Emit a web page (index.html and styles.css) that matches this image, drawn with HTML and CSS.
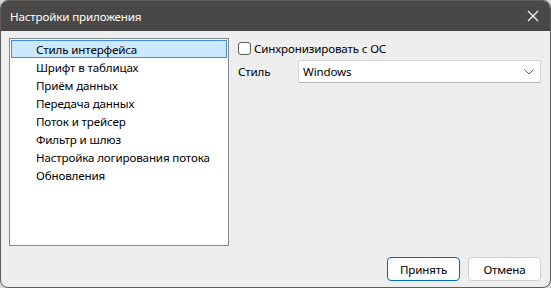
FILE: index.html
```html
<!DOCTYPE html>
<html lang="ru">
<head>
  <meta charset="UTF-8">
  <title>Настройки приложения</title>
  <link rel="stylesheet" href="styles.css">
</head>
<body>
  <div class="window">
    <div class="titlebar">
      <span class="title">Настройки приложения</span>
      <svg class="close" width="12" height="12" viewBox="0 0 12 12">
        <path d="M1 1 L11 11 M11 1 L1 11" stroke="#ffffff" stroke-width="1.2" fill="none"/>
      </svg>
    </div>

    <div class="content">
      <div class="main">
        <ul class="pages">
          <li class="active">Стиль интерфейса</li>
          <li>Шрифт в таблицах</li>
          <li>Приём данных</li>
          <li>Передача данных</li>
          <li>Поток и трейсер</li>
          <li>Фильтр и шлюз</li>
          <li>Настройка логирования потока</li>
          <li>Обновления</li>
        </ul>

        <div class="panel">
          <label class="check">
            <span class="box"></span>
            Синхронизировать с ОС
          </label>
          <div class="row">
            <span class="row-label">Стиль</span>
            <div class="combo">
              <span>Windows</span>
              <svg width="10" height="6" viewBox="0 0 10 6">
                <path d="M0.5 0.5 L5 5 L9.5 0.5" stroke="#606060" stroke-width="1" fill="none"/>
              </svg>
            </div>
          </div>
        </div>
      </div>

      <div class="footer">
        <button class="btn primary">Принять</button>
        <button class="btn">Отмена</button>
      </div>
    </div>
  </div>
</body>
</html>
```

FILE: styles.css
```css
html, body {
  margin: 0;
  padding: 0;
  background: #d8d8d8;
}

body {
  font-family: "Noto Sans", sans-serif;
  font-size: 11.6px;
  letter-spacing: -0.15px;
  color: #000;
}

.window {
  width: 551px;
  height: 288px;
  box-sizing: border-box;
  border: 1px solid #5c5c5c;
  border-radius: 8px;
  background: #eeeeee;
  overflow: hidden;
  display: flex;
  flex-direction: column;
}

.titlebar {
  height: 30px;
  background: #4a4846;
  color: #fff;
  display: flex;
  align-items: center;
  justify-content: space-between;
  padding: 0 11px 0 9px;
  flex-shrink: 0;
}

.title {
  padding-top: 1px;
}

.content {
  flex: 1;
  padding: 7px 9px 0 8px;
  display: flex;
  flex-direction: column;
}

.main {
  display: flex;
  gap: 9px;
}

.pages {
  list-style: none;
  margin: 0;
  padding: 1px;
  width: 216px;
  height: 204px;
  border: 1px solid #828790;
  background: #fff;
}

.pages li {
  height: 18px;
  line-height: 17px;
  padding-left: 24px;
  border: 1px solid transparent;
  box-sizing: border-box;
}

.pages li.active {
  background: #cce8ff;
  border-color: #3d8ee0;
}

.panel {
  flex: 1;
  padding-top: 3px;
}

.check {
  display: flex;
  align-items: center;
  gap: 3px;
  height: 15px;
}

.box {
  width: 11px;
  height: 11px;
  border: 1px solid #5a5a5a;
  border-radius: 3px;
  background: #fff;
}

.row {
  display: flex;
  align-items: center;
  margin-top: 4px;
}

.row-label {
  width: 60px;
}

.combo {
  flex: 1;
  height: 21px;
  border: 1px solid #d6d6d6;
  border-bottom-color: #b8b8b8;
  border-radius: 2px;
  background: #fff;
  display: flex;
  align-items: center;
  justify-content: space-between;
  padding: 0 6px 0 4px;
}

.footer {
  display: flex;
  justify-content: flex-end;
  gap: 8px;
  margin-top: 11px;
}

.btn {
  width: 73px;
  height: 24px;
  font-family: inherit;
  font-size: inherit;
  letter-spacing: inherit;
  color: #000;
  background: #fdfdfd;
  border: 1px solid #d0d0d0;
  border-radius: 4px;
  padding: 0;
}

.btn.primary {
  border-color: #0067c0;
}
```
